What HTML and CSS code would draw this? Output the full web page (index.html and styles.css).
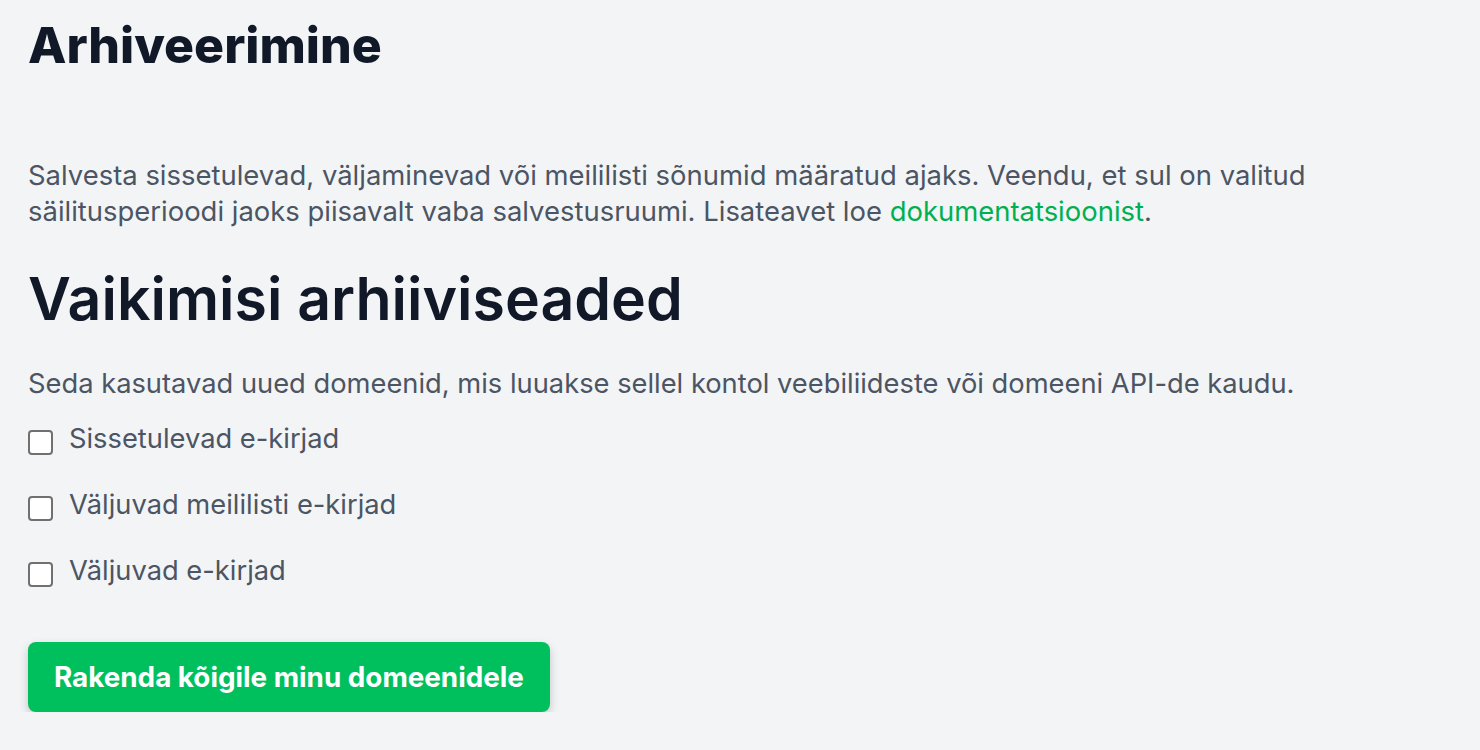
FILE: index.html
```html
<!DOCTYPE html>
<html lang="et">
<head>
<meta charset="utf-8">
<title>Arhiveerimine</title>
<link rel="stylesheet" href="styles.css">
</head>
<body>
<main class="page">
  <h1 class="title">Arhiveerimine</h1>
  <p class="intro">Salvesta sissetulevad, väljaminevad või meililisti sõnumid määratud ajaks. Veendu, et sul on valitud säilitusperioodi jaoks piisavalt vaba salvestusruumi. Lisateavet loe <a class="link" href="#">dokumentatsioonist</a>.</p>
  <h2 class="subtitle">Vaikimisi arhiiviseaded</h2>
  <p class="desc">Seda kasutavad uued domeenid, mis luuakse sellel kontol veebiliideste või domeeni API-de kaudu.</p>
  <div class="options">
    <label class="option"><span class="box"></span><span class="label-text">Sissetulevad e-kirjad</span></label>
    <label class="option"><span class="box"></span><span class="label-text">Väljuvad meililisti e-kirjad</span></label>
    <label class="option"><span class="box"></span><span class="label-text">Väljuvad e-kirjad</span></label>
  </div>
  <button class="apply" type="button">Rakenda kõigile minu domeenidele</button>
</main>
</body>
</html>
```
FILE: styles.css
```css
html, body {
  margin: 0;
  padding: 0;
  background: #f3f4f6;
}
body {
  font-family: Inter, "Noto Sans", sans-serif;
  color: #4b5563;
}
.page {
  padding: 12px 28px 0 28px;
  width: 1300px;
}
.title {
  margin: 0;
  font-size: 50px;
  line-height: 66px;
  font-weight: 800;
  color: #111827;
}
.intro {
  margin: 79px 0 0 0;
  font-size: 27.45px;
  line-height: 36px;
}
.link {
  color: #00b050;
  text-decoration: none;
}
.subtitle {
  margin: 30px 0 0 0;
  font-size: 59px;
  line-height: 80px;
  font-weight: 600;
  color: #111827;
}
.desc {
  margin: 27px 0 0 0;
  font-size: 27.3px;
  line-height: 36px;
}
.options {
  display: flex;
  flex-direction: column;
  gap: 30px;
  margin-top: 19px;
}
.option {
  display: flex;
  align-items: center;
  gap: 16px;
  font-size: 27.3px;
  line-height: 36px;
}
.box {
  width: 21px;
  height: 21px;
  border: 2px solid #707070;
  border-radius: 4px;
  background: #fff;
  flex: none;
  margin-top: 6px;
}
.apply {
  margin-top: 53px;
  height: 70px;
  padding: 0 26px;
  background: #00c05e;
  color: #fff;
  border: none;
  border-radius: 8px;
  font-family: Inter, "Noto Sans", sans-serif;
  font-size: 27.8px;
  font-weight: 700;
  box-shadow: 0 4px 10px rgba(0,0,0,0.2);
}
```
